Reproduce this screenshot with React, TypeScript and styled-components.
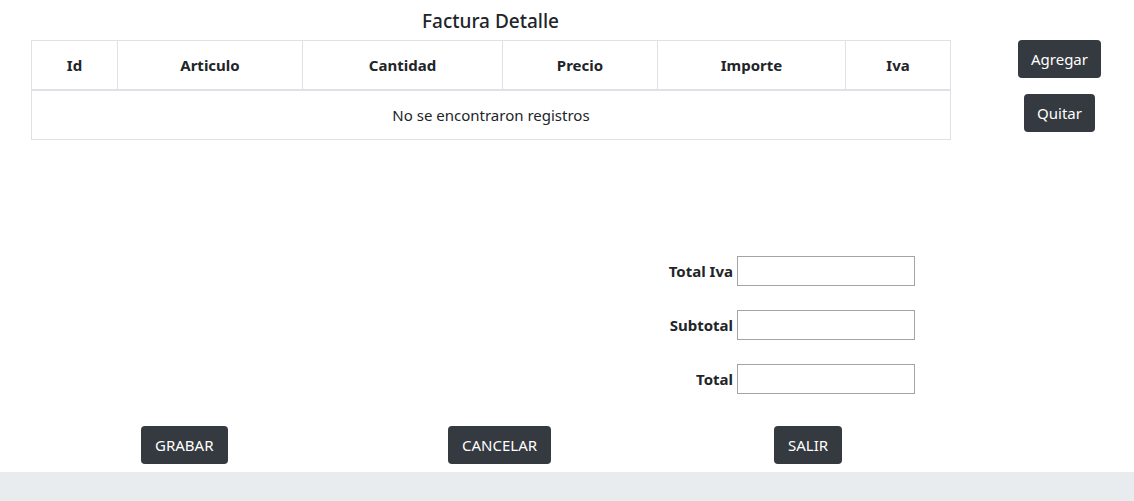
import React from "react";
import styled, { createGlobalStyle } from "styled-components";

const Global = createGlobalStyle`
  html, body { margin: 0; padding: 0; background: #e9ecef; }
  body { font-family: "Noto Sans", "Open Sans", sans-serif; color: #212529; font-size: 16px; }
`;

const Page = styled.div`
  background: #ffffff;
  height: 472px;
  display: flex;
  flex-direction: column;
`;

const Top = styled.div`
  display: flex;
  align-items: flex-start;
  padding-left: 31px;
`;

const Main = styled.div`
  width: 919px;
  display: flex;
  flex-direction: column;
`;

const Title = styled.h5`
  margin: 0;
  height: 40px;
  padding-top: 9px;
  box-sizing: border-box;
  font-size: 19px;
  font-weight: 500;
  line-height: 24px;
  text-align: center;
`;

const Table = styled.table`
  width: 919px;
  border-collapse: collapse;
  table-layout: fixed;
`;

const Th = styled.th<{ $w: number }>`
  width: ${(p) => p.$w}px;
  height: 49px;
  box-sizing: border-box;
  border: 1px solid #dee2e6;
  border-bottom: 2px solid #dee2e6;
  font-weight: 700;
  font-size: 15px;
  text-align: center;
  padding: 0;
`;

const Td = styled.td`
  height: 48px;
  border: 1px solid #dee2e6;
  text-align: center;
  font-size: 15px;
  padding: 0;
`;

const Side = styled.div`
  flex: 1;
  display: flex;
  flex-direction: column;
  align-items: center;
  padding-top: 40px;
  padding-left: 35px;
  gap: 16px;
`;

const DarkButton = styled.button<{ $wide?: boolean }>`
  background: #343a40;
  color: #ffffff;
  border: none;
  border-radius: 4px;
  height: 38px;
  padding: 0 ${(p) => (p.$wide ? 14 : 13)}px;
  font-family: inherit;
  font-size: 15px;
  line-height: 24px;
  cursor: pointer;
`;

const Totals = styled.div`
  margin-top: 116px;
  display: grid;
  grid-template-columns: 737px 178px;
  row-gap: 24px;
  align-items: center;
`;

const Label = styled.label`
  font-weight: 700;
  font-size: 15px;
  text-align: right;
  padding-right: 4px;
`;

const Input = styled.input`
  width: 178px;
  height: 30px;
  box-sizing: border-box;
  border: 1px solid #a4a4a4;
  padding: 2px 4px;
  font-family: inherit;
`;

const Actions = styled.div`
  margin-top: 32px;
  display: grid;
  grid-template-columns: 141px 86px 221px 104px 222px 66px;
`;

const Slot = styled.div<{ $col: number }>`
  grid-column: ${(p) => p.$col};
  display: flex;
`;

const cols: [string, number][] = [
  ["Id", 86],
  ["Articulo", 185],
  ["Cantidad", 200],
  ["Precio", 155],
  ["Importe", 188],
  ["Iva", 105],
];

export default function App() {
  return (
    <>
      <Global />
      <Page>
        <Top>
          <Main>
            <Title>Factura Detalle</Title>
            <Table>
              <thead>
                <tr>
                  {cols.map(([c, w]) => (
                    <Th key={c} $w={w}>
                      {c}
                    </Th>
                  ))}
                </tr>
              </thead>
              <tbody>
                <tr>
                  <Td colSpan={6}>No se encontraron registros</Td>
                </tr>
              </tbody>
            </Table>
          </Main>
          <Side>
            <DarkButton>Agregar</DarkButton>
            <DarkButton>Quitar</DarkButton>
          </Side>
        </Top>
        <Totals>
          <Label>Total Iva</Label>
          <Input />
          <Label>Subtotal</Label>
          <Input />
          <Label>Total</Label>
          <Input />
        </Totals>
        <Actions>
          <Slot $col={2}>
            <DarkButton $wide>GRABAR</DarkButton>
          </Slot>
          <Slot $col={4}>
            <DarkButton $wide>CANCELAR</DarkButton>
          </Slot>
          <Slot $col={6}>
            <DarkButton $wide>SALIR</DarkButton>
          </Slot>
        </Actions>
      </Page>
    </>
  );
}
